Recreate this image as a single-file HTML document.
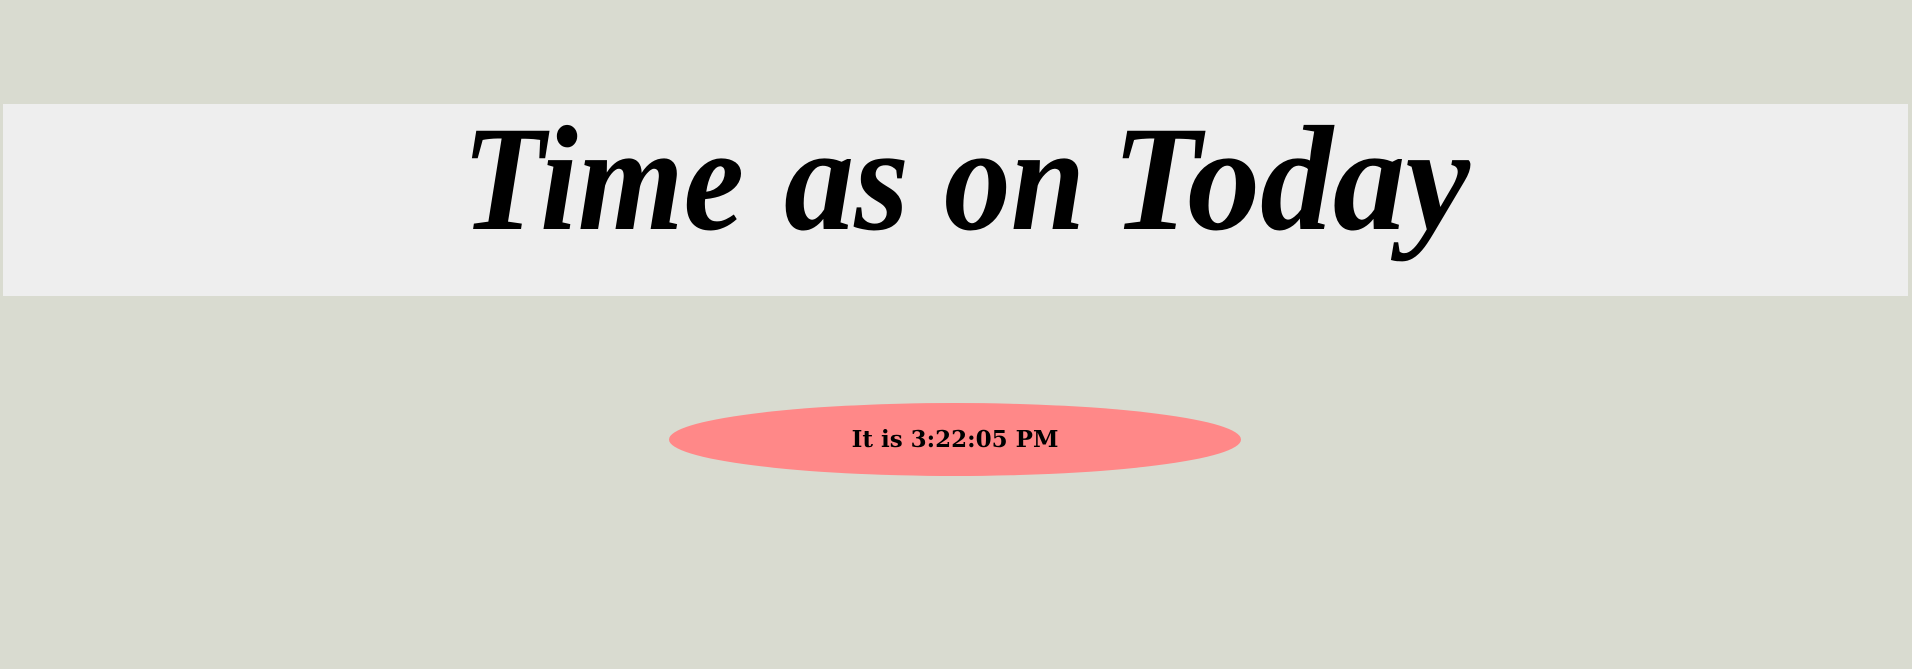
<!DOCTYPE html>
<html><head><style>
html,body{margin:0;padding:0;width:1912px;height:669px;background:#d9dbd0;overflow:hidden;position:relative}
.banner{position:absolute;left:3px;top:104px;width:1905px;height:192px;background:#eeeeee}
svg{position:absolute;left:0;top:0}
.ell{position:absolute;left:669px;top:403px;width:572px;height:73px;border-radius:50%;background:#ff8888;text-align:center;font:bold 23px/73px "DejaVu Serif",serif;color:#000}
</style></head><body>
<div class="banner"></div>
<svg width="1912" height="669" xmlns="http://www.w3.org/2000/svg">
<g font-family="Liberation Serif, serif" font-style="italic" font-weight="bold" font-size="150" fill="#000">
<text x="462" y="229" textLength="282" lengthAdjust="spacingAndGlyphs">Time</text>
<text x="784" y="229" textLength="125" lengthAdjust="spacingAndGlyphs">as</text>
<text x="944" y="229" textLength="141" lengthAdjust="spacingAndGlyphs">on</text>
<text x="1112" y="229" textLength="358" lengthAdjust="spacingAndGlyphs">Today</text>
</g>
</svg>
<div class="ell">It is 3:22:05 PM</div>
</body></html>
